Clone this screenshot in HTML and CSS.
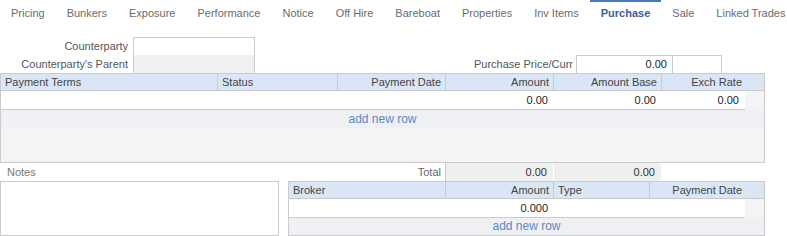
FILE: index.html
```html
<html lang="en">

<head>
  <meta charset="UTF-8">
  <meta name="viewport" content="width=device-width, initial-scale=1.0">
  <title>Purchase</title>
  <link rel="stylesheet" href="styles.css">
</head>

<body>
  <nav class="tabs">
    <a class="tab">Pricing</a>
    <a class="tab">Bunkers</a>
    <a class="tab">Exposure</a>
    <a class="tab">Performance</a>
    <a class="tab">Notice</a>
    <a class="tab">Off Hire</a>
    <a class="tab">Bareboat</a>
    <a class="tab">Properties</a>
    <a class="tab">Inv Items</a>
    <a class="tab active">Purchase</a>
    <a class="tab">Sale</a>
    <a class="tab">Linked Trades</a>
  </nav>

  <div class="party">
    <div class="field-row">
      <label class="field-label">Counterparty</label>
      <span class="input"></span>
    </div>
    <div class="field-row">
      <label class="field-label">Counterparty's Parent</label>
      <span class="input readonly"></span>
      <label class="price-label">Purchase Price/Curr</label>
      <span class="input input-num">0.00</span>
      <span class="input input-curr"></span>
    </div>
  </div>

  <div class="grid terms">
    <div class="grid-head">
      <div>Payment Terms</div>
      <div>Status</div>
      <div class="num">Payment Date</div>
      <div class="num">Amount</div>
      <div class="num">Amount Base</div>
      <div class="num last">Exch Rate</div>
    </div>
    <div class="grid-row">
      <div></div>
      <div></div>
      <div></div>
      <div class="num">0.00</div>
      <div class="num">0.00</div>
      <div class="num">0.00</div>
    </div>
    <div class="add-row"><a>add new row</a></div>
  </div>

  <div class="totals">
    <div class="totals-label">
      <span class="notes-label">Notes</span>
      <span>Total</span>
    </div>
    <div class="total-cell">0.00</div>
    <div class="total-cell">0.00</div>
  </div>

  <div class="bottom">
    <div class="notes"></div>
    <div class="grid broker">
      <div class="grid-head">
        <div>Broker</div>
        <div class="num">Amount</div>
        <div>Type</div>
        <div class="num last">Payment Date</div>
      </div>
      <div class="grid-row">
        <div></div>
        <div class="num">0.000</div>
        <div></div>
        <div></div>
      </div>
      <div class="add-row"><a>add new row</a></div>
    </div>
  </div>
</body>

</html>
```

FILE: styles.css
```css
* {
  box-sizing: border-box;
  margin: 0;
  padding: 0;
}

body {
  background: #FFF;
  color: #333;
  font-family: "Liberation Sans", Arial, sans-serif;
  font-size: 11px;
  overflow: hidden;
}

.tabs {
  display: flex;
  height: 26px;
  white-space: nowrap;
}

.tab {
  padding: 0 11px;
  line-height: 26px;
  color: #6b6b6b;
  cursor: pointer;
}

.tab.active {
  color: #3d5d99;
  font-weight: bold;
  box-shadow: inset 0 2px 0 #4b77c1;
}

.party {
  margin-top: 11px;
  width: 765px;
}

.field-row {
  display: flex;
  height: 18px;
  align-items: flex-start;
}

.field-label,
.price-label {
  line-height: 18px;
  color: #555;
}

.field-label {
  width: 128px;
  text-align: right;
}

.price-label {
  margin-left: auto;
  margin-right: 3px;
}

.input {
  display: block;
  width: 122px;
  height: 19px;
  margin-left: 5px;
  border: 1px solid #ccc;
  background: #FFF;
  line-height: 17px;
  color: #222;
}

.input.readonly {
  border-top: none;
  background: #f0f0f0;
}

.input-num {
  width: 97px;
  margin-left: 0;
  padding-right: 5px;
  text-align: right;
}

.input-curr {
  width: 50px;
  margin-left: -1px;
  margin-right: 43px;
}

.grid {
  border: 1px solid #ccc;
  background: #f4f4f4;
}

.terms {
  width: 765px;
  height: 90px;
}

.grid-head,
.grid-row {
  display: grid;
}

.terms .grid-head,
.terms .grid-row {
  grid-template-columns: 217px 120px 108px 108px 108px 83px;
}

.grid-head {
  height: 17px;
  line-height: 16px;
  background: #dae6f6;
  border-bottom: 1px solid #c9c9c9;
  color: #444;
}

.grid-head>div {
  padding: 0 4px;
  border-right: 1px solid #b9cce6;
  overflow: hidden;
  white-space: nowrap;
}

.grid-head>div.last {
  border-right: none;
  padding-right: 22px;
}

.terms .grid-head>.last {
  width: 102px;
}

.grid-row {
  height: 19px;
  line-height: 18px;
}

.grid-row>div {
  background: #FFF;
  border-bottom: 1px solid #ccc;
  padding: 0 6px;
  color: #222;
}

.num {
  text-align: right;
}

.add-row {
  height: 18px;
  line-height: 18px;
  background: #eef0f3;
  text-align: center;
}

.broker .add-row {
  height: 17px;
  line-height: 17px;
}

.add-row a {
  color: #5d88c6;
  font-size: 12px;
  cursor: pointer;
}

.totals {
  display: flex;
  height: 18px;
  line-height: 18px;
  width: 765px;
}

.totals-label {
  display: flex;
  justify-content: space-between;
  width: 445px;
  padding: 0 4px 0 7px;
  color: #666;
}

.notes-label {
  color: #777;
}

.total-cell {
  width: 108px;
  padding-right: 6px;
  text-align: right;
  background: #efefef;
  border-left: 1px solid #ccc;
  color: #333;
}

.total-cell+.total-cell {
  border-left: 1px solid #FFF;
}

.bottom {
  display: flex;
  gap: 9px;
}

.notes {
  width: 279px;
  height: 55px;
  border: 1px solid #ccc;
  background: #FFF;
}

.broker {
  width: 477px;
}

.broker .grid-head {
  grid-template-columns: 157px 108px 96px 1fr;
}

.broker .grid-row {
  grid-template-columns: 157px 108px 96px 95px;
}
```
